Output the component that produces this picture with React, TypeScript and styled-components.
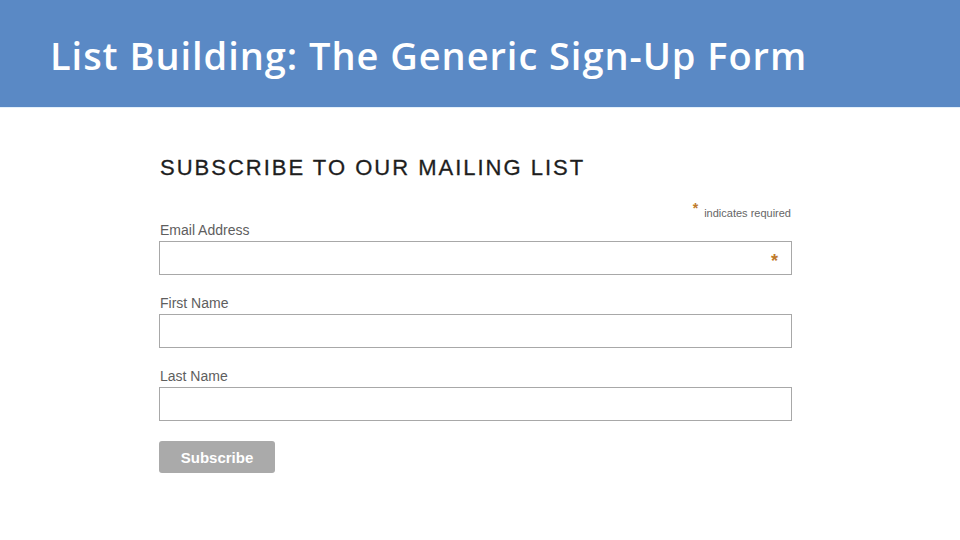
import React from 'react';
import styled, { createGlobalStyle } from 'styled-components';

const GlobalStyle = createGlobalStyle`
  html, body {
    margin: 0;
    padding: 0;
    background: #ffffff;
  }
  body {
    font-family: "Liberation Sans", Arial, sans-serif;
  }
`;

const Slide = styled.div`
  width: 960px;
  height: 540px;
  display: flex;
  flex-direction: column;
  background: #ffffff;
  overflow: hidden;
`;

const Banner = styled.header`
  height: 108px;
  background: #5a89c5;
  border-bottom: 1px solid #e4f0fb;
  display: flex;
  align-items: center;
  padding: 2px 0 0 50px;
  box-sizing: border-box;
`;

const Title = styled.h1`
  margin: 0;
  color: #ffffff;
  font-family: "Open Sans", sans-serif;
  font-weight: 600;
  font-size: 38px;
  letter-spacing: 0.95px;
`;

const Form = styled.form`
  width: 633px;
  margin: 47px 0 0 159px;
  display: flex;
  flex-direction: column;
`;

const FormHeading = styled.h2`
  margin: 0 0 0 1px;
  font-family: "Liberation Sans", Arial, sans-serif;
  font-weight: 400;
  font-size: 22px;
  letter-spacing: 2px;
  color: #1e1e1e;
  -webkit-text-stroke: 0.3px #1e1e1e;
`;

const RequiredNote = styled.div`
  align-self: flex-end;
  margin: 20px 1px 0 0;
  display: flex;
  align-items: flex-start;
  font-size: 11px;
  color: #666;
  line-height: 14px;
`;

const Star = styled.span`
  color: #c07a2c;
  font-size: 14px;
  font-weight: 700;
  line-height: 1;
`;

const NoteText = styled.span`
  margin-top: 5px;
  margin-left: 6px;
`;

const Field = styled.div<{ $gap: number }>`
  display: flex;
  flex-direction: column;
  margin-top: ${p => p.$gap}px;
`;

const Label = styled.label`
  font-size: 14px;
  color: #5e5e5e;
  margin: 0 0 3px 1px;
  line-height: 16px;
`;

const InputBox = styled.div`
  position: relative;
  height: 34px;
  border: 1px solid #a8a8a8;
  box-sizing: border-box;
  background: #fff;
`;

const InputStar = styled(Star)`
  position: absolute;
  right: 13px;
  top: 10px;
  font-size: 18px;
`;

const Button = styled.button`
  margin-top: 20px;
  width: 116px;
  height: 32px;
  border: none;
  border-radius: 3px;
  background: #aaaaaa;
  color: #ffffff;
  font-family: "Liberation Sans", Arial, sans-serif;
  font-weight: 700;
  font-size: 15px;
  letter-spacing: 0;
`;

const fields = [
  { label: 'Email Address', required: true, gap: 2 },
  { label: 'First Name', required: false, gap: 20 },
  { label: 'Last Name', required: false, gap: 20 },
];

export default function App() {
  return (
    <Slide>
      <GlobalStyle />
      <Banner>
        <Title>List Building: The Generic Sign-Up Form</Title>
      </Banner>
      <Form onSubmit={e => e.preventDefault()}>
        <FormHeading>SUBSCRIBE TO OUR MAILING LIST</FormHeading>
        <RequiredNote>
          <Star>*</Star>
          <NoteText>indicates required</NoteText>
        </RequiredNote>
        {fields.map(f => (
          <Field key={f.label} $gap={f.gap}>
            <Label>{f.label}</Label>
            <InputBox>{f.required && <InputStar>*</InputStar>}</InputBox>
          </Field>
        ))}
        <Button type="submit">Subscribe</Button>
      </Form>
    </Slide>
  );
}
